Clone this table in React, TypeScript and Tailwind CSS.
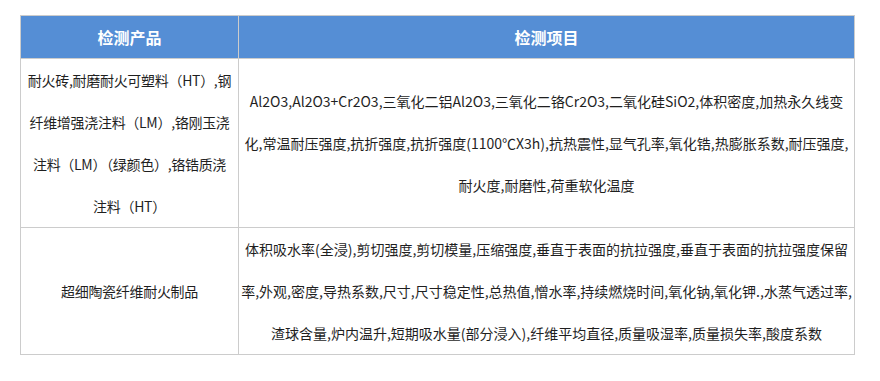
const rows = [
  {
    product: [
      "耐火砖,耐磨耐火可塑料（HT）,钢",
      "纤维增强浇注料（LM）,铬刚玉浇",
      "注料（LM）（绿颜色）,铬锆质浇",
      "注料（HT）",
    ],
    items: [
      "Al2O3,Al2O3+Cr2O3,三氧化二铝Al2O3,三氧化二铬Cr2O3,二氧化硅SiO2,体积密度,加热永久线变",
      "化,常温耐压强度,抗折强度,抗折强度(1100℃X3h),抗热震性,显气孔率,氧化锆,热膨胀系数,耐压强度,",
      "耐火度,耐磨性,荷重软化温度",
    ],
  },
  {
    product: ["超细陶瓷纤维耐火制品"],
    items: [
      "体积吸水率(全浸),剪切强度,剪切模量,压缩强度,垂直于表面的抗拉强度,垂直于表面的抗拉强度保留",
      "率,外观,密度,导热系数,尺寸,尺寸稳定性,总热值,憎水率,持续燃烧时间,氧化钠,氧化钾.,水蒸气透过率,",
      "渣球含量,炉内温升,短期吸水量(部分浸入),纤维平均直径,质量吸湿率,质量损失率,酸度系数",
    ],
  },
];

function Lines({ lines }: { lines: string[] }) {
  return (
    <div className="flex flex-col items-center">
      {lines.map((line) => (
        <span key={line} className="block whitespace-nowrap leading-[42px]">
          {line}
        </span>
      ))}
    </div>
  );
}

export default function App() {
  return (
    <div className="h-[381px] w-[880px] bg-white pl-5 pt-[15px] font-['Microsoft_YaHei','Noto_Sans_CJK_SC',sans-serif] text-[14px] text-[#1f1f1f]">
      <table className="w-[835px] table-fixed border-collapse">
        <colgroup>
          <col className="w-[218px]" />
          <col />
        </colgroup>
        <thead>
          <tr className="h-[43px] bg-[#558ed5] text-[16px] font-bold text-white">
            <th className="border border-[#cccccc] text-center">检测产品</th>
            <th className="border border-[#cccccc] text-center">检测项目</th>
          </tr>
        </thead>
        <tbody>
          {rows.map((row) => (
            <tr key={row.product[0]}>
              <td className="border border-[#cccccc] px-0 align-middle tracking-[-0.3px]">
                <Lines lines={row.product} />
              </td>
              <td className="border border-[#cccccc] px-1 align-middle">
                <Lines lines={row.items} />
              </td>
            </tr>
          ))}
        </tbody>
      </table>
    </div>
  );
}
